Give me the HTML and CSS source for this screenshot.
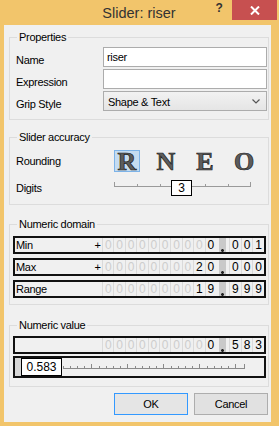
FILE: index.html
```html
<!DOCTYPE html>
<html>

<head>
  <meta http-equiv="Content-Type" content="text/html; charset=UTF-8" />
  <link rel="stylesheet" href="styles.css">
</head>

<body>
  <div class="window">
    <div class="titlebar">
      <span class="title">Slider: riser</span>
      <span class="help">?</span>
      <span class="close">
        <svg width="10" height="9" viewBox="0 0 10 9"><path d="M1 0.5 L9 8.5 M9 0.5 L1 8.5" stroke="#fff" stroke-width="2" /></svg>
      </span>
    </div>

    <div class="client">
      <!-- Properties -->
      <fieldset class="group props">
        <legend>Properties</legend>
        <div class="field">
          <label>Name</label>
          <input class="textbox" type="text" value="riser">
        </div>
        <div class="field">
          <label>Expression</label>
          <input class="textbox" type="text" value="">
        </div>
        <div class="field">
          <label>Grip Style</label>
          <div class="combo">
            <span>Shape &amp; Text</span>
            <svg width="8" height="5" viewBox="0 0 8 5"><path d="M0.5 0.5 L4 4 L7.5 0.5" fill="none" stroke="#555" stroke-width="1.2" /></svg>
          </div>
        </div>
      </fieldset>

      <!-- Slider accuracy -->
      <fieldset class="group accuracy">
        <legend>Slider accuracy</legend>
        <div class="field rounding">
          <label>Rounding</label>
          <div class="modes">
            <span class="mode active">R</span>
            <span class="mode">N</span>
            <span class="mode">E</span>
            <span class="mode">O</span>
          </div>
        </div>
        <div class="field digits">
          <label>Digits</label>
          <div class="track">
            <svg width="167" height="20" viewBox="0 0 167 20">
              <path d="M15 8.5 H152" stroke="#9a9a9a" />
              <path d="M15.5 4 V9 M38.5 6 V9 M61.5 6 V9 M84.5 6 V9 M106.5 6 V9 M129.5 6 V9 M151.5 4 V9" stroke="#9a9a9a" />
            </svg>
            <span class="thumb">3</span>
          </div>
        </div>
      </fieldset>

      <!-- Numeric domain -->
      <fieldset class="group domain">
        <legend>Numeric domain</legend>
        <div class="numrow">
          <span class="numlabel">Min</span>
          <span class="sign">+</span>
          <span class="cells">
            <span class="d">0</span><span class="d">0</span><span class="d">0</span><span class="d">0</span><span class="d">0</span><span class="d">0</span><span class="d">0</span><span class="d">0</span><span class="d">0</span><span class="d on">0</span><span class="dot"></span><span class="d f on">0</span><span class="d f on">0</span><span class="d f on">1</span>
          </span>
        </div>
        <div class="numrow">
          <span class="numlabel">Max</span>
          <span class="sign">+</span>
          <span class="cells">
            <span class="d">0</span><span class="d">0</span><span class="d">0</span><span class="d">0</span><span class="d">0</span><span class="d">0</span><span class="d">0</span><span class="d">0</span><span class="d on">2</span><span class="d on">0</span><span class="dot"></span><span class="d f on">0</span><span class="d f on">0</span><span class="d f on">0</span>
          </span>
        </div>
        <div class="numrow">
          <span class="numlabel">Range</span>
          <span class="sign"></span>
          <span class="cells">
            <span class="d">0</span><span class="d">0</span><span class="d">0</span><span class="d">0</span><span class="d">0</span><span class="d">0</span><span class="d">0</span><span class="d">0</span><span class="d on">1</span><span class="d on">9</span><span class="dot"></span><span class="d f on">9</span><span class="d f on">9</span><span class="d f on">9</span>
          </span>
        </div>
      </fieldset>

      <!-- Numeric value -->
      <fieldset class="group value">
        <legend>Numeric value</legend>
        <div class="numrow">
          <span class="numlabel"></span>
          <span class="cells">
            <span class="d">0</span><span class="d">0</span><span class="d">0</span><span class="d">0</span><span class="d">0</span><span class="d">0</span><span class="d">0</span><span class="d">0</span><span class="d">0</span><span class="d on">0</span><span class="dot"></span><span class="d f on">5</span><span class="d f on">8</span><span class="d f on">3</span>
          </span>
        </div>
        <div class="valslider">
          <span class="grip"></span>
          <span class="valbox">0.583</span>
          <svg width="190" height="20" viewBox="0 0 190 20">
            <path d="M0 10.5 H182" stroke="#8a8a8a" />
            <path d="M0.5 8 V11 M7.5 8 V11 M14.5 8 V11 M21.5 8 V11 M28.5 6 V11 M36.5 8 V11 M43.5 8 V11 M50.5 8 V11 M57.5 8 V11 M64.5 6 V11 M72.5 8 V11 M79.5 8 V11 M86.5 8 V11 M93.5 8 V11 M100.5 6 V11 M108.5 8 V11 M115.5 8 V11 M122.5 8 V11 M129.5 8 V11 M136.5 6 V11 M144.5 8 V11 M151.5 8 V11 M158.5 8 V11 M165.5 8 V11 M172.5 6 V11 M181.5 6 V11" stroke="#8a8a8a" />
          </svg>
        </div>
      </fieldset>

      <div class="buttons">
        <button class="btn default">OK</button>
        <button class="btn">Cancel</button>
      </div>
    </div>
  </div>
</body>

</html>
```

FILE: styles.css
```css
html {
  height: 100%;
}

body {
  margin: 0;
  width: 279px;
  height: 426px;
  overflow: hidden;
  font-family: "Liberation Sans", Arial, sans-serif;
  font-size: 11px;
  letter-spacing: -0.3px;
  color: #000;
}

.window {
  height: 426px;
  background-color: #f2c56b;
  display: flex;
  flex-direction: column;
}

/* Title bar */
.titlebar {
  display: flex;
  height: 25px;
  flex-shrink: 0;
}

.titlebar .title {
  flex: 1;
  padding-left: 66px;
  text-align: center;
  font-size: 14.5px;
  line-height: 26px;
  letter-spacing: 0;
  color: #333;
}

.titlebar .help {
  width: 14px;
  margin-right: 6px;
  font-size: 12px;
  font-weight: bold;
  line-height: 16px;
  color: #333;
  text-align: center;
}

.titlebar .close {
  width: 45px;
  height: 20px;
  margin-right: 2px;
  background-color: #c75050;
  display: flex;
  align-items: center;
  justify-content: center;
}

/* Client area */
.client {
  flex: 1;
  margin: 0 8px 4px 4px;
  padding: 0 2px 0 5px;
  background-color: #f0f0f0;
  display: flex;
  flex-direction: column;
}

.group {
  margin: 0;
  padding: 3px 2px 6px 3px;
  border: 1px solid #dcdcdc;
  min-width: 0;
}

.group legend {
  padding: 0 2px;
  margin-left: 4px;
  line-height: 14px;
}

.props {
  margin-top: 5px;
}

.accuracy {
  margin-top: 10px;
  padding-top: 6px;
  padding-bottom: 6px;
}

.domain {
  margin-top: 12px;
  padding-top: 5px;
  padding-bottom: 6px;
}

.value {
  margin-top: 13px;
  padding-top: 4px;
  padding-bottom: 8px;
}

.field {
  display: flex;
  align-items: center;
  height: 20px;
  margin-bottom: 2px;
}

.field label {
  width: 87px;
  padding-left: 3px;
  padding-top: 5px;
}

.rounding label,
.digits label {
  padding-top: 0;
}

.textbox {
  flex: 1;
  height: 20px;
  box-sizing: border-box;
  margin: 0 -1px 0 0;
  padding: 0 3px;
  border: 1px solid #acacac;
  background-color: #fff;
  font-family: "Liberation Sans", Arial, sans-serif;
  font-size: 11px;
  letter-spacing: -0.3px;
  outline: none;
}

.combo {
  flex: 1;
  height: 20px;
  box-sizing: border-box;
  margin-right: -1px;
  padding: 1px 6px 0 4px;
  border: 1px solid #acacac;
  background: linear-gradient(#f2f2f2, #e5e5e5);
  display: flex;
  align-items: center;
  justify-content: space-between;
}

/* Rounding modes */
.rounding {
  height: 22px;
  margin-bottom: 6px;
}

.modes {
  display: flex;
  gap: 13px;
  margin-left: 11px;
}

.mode {
  width: 24px;
  height: 20px;
  border: 1px solid transparent;
  font-family: "Liberation Serif", "Times New Roman", serif;
  font-size: 26px;
  font-weight: bold;
  line-height: 22px;
  letter-spacing: 0;
  text-align: center;
  color: #5c5c5c;
  -webkit-text-stroke: 0.7px #1c1c1c;
}

.mode.active {
  background-color: #c5dcf1;
  border-color: #7db3e8;
}

.digits {
  margin-bottom: 0;
}

.track {
  flex: 1;
  height: 20px;
  position: relative;
}

.track svg {
  display: block;
}

.track .thumb {
  position: absolute;
  left: 72px;
  top: 2px;
  width: 19px;
  height: 14px;
  border: 1px solid #000;
  background-color: #fff;
  font-size: 12px;
  line-height: 14px;
  text-align: center;
}

/* Digit rows */
.numrow {
  display: flex;
  align-items: stretch;
  height: 18px;
  box-sizing: border-box;
  border: 2px solid #111;
  margin-bottom: 4px;
}

.numrow:last-child {
  margin-bottom: 0;
}

.numlabel {
  flex: 1;
  padding-left: 1px;
  line-height: 14px;
}

.sign {
  width: 9px;
  line-height: 14px;
  text-align: center;
}

.cells {
  display: flex;
}

.d {
  width: 11.4px;
  box-sizing: border-box;
  border-left: 1px solid #dadada;
  text-align: center;
  font-size: 12px;
  line-height: 14px;
  letter-spacing: 0;
  color: #cdcdcd;
}

.d.f {
  width: 11.7px;
}

.d.on {
  color: #000;
}

.dot {
  width: 13px;
  box-sizing: border-box;
  border-left: 3px solid #f0f0f0;
  border-right: 3px solid #f0f0f0;
  background: radial-gradient(circle at 50% 12.5px, #222 1.2px, transparent 1.6px), #c9c9c9;
}

.value .numrow {
  margin-bottom: 2px;
}

.valslider {
  display: flex;
  align-items: flex-start;
  height: 22px;
  box-sizing: border-box;
  border: 2px solid #111;
}

.grip {
  width: 6px;
  height: 18px;
  background-color: #d6d6d6;
}

.valbox {
  width: 39px;
  height: 16px;
  border: 1px solid #000;
  background-color: #fff;
  font-size: 12px;
  line-height: 16px;
  text-align: center;
  letter-spacing: 0;
  margin-right: 1px;
}

.valslider svg {
  display: block;
}

/* Dialog buttons */
.buttons {
  display: flex;
  justify-content: flex-end;
  gap: 6px;
  margin-top: 6px;
  padding-right: 1px;
}

.btn {
  width: 74px;
  height: 22px;
  border: 1px solid #adadad;
  background-color: #e1e1e1;
  font-family: "Liberation Sans", Arial, sans-serif;
  font-size: 11px;
  letter-spacing: -0.3px;
  padding: 0;
}

.btn.default {
  border-color: #3399ff;
  background-color: #e5e5e5;
}
```
